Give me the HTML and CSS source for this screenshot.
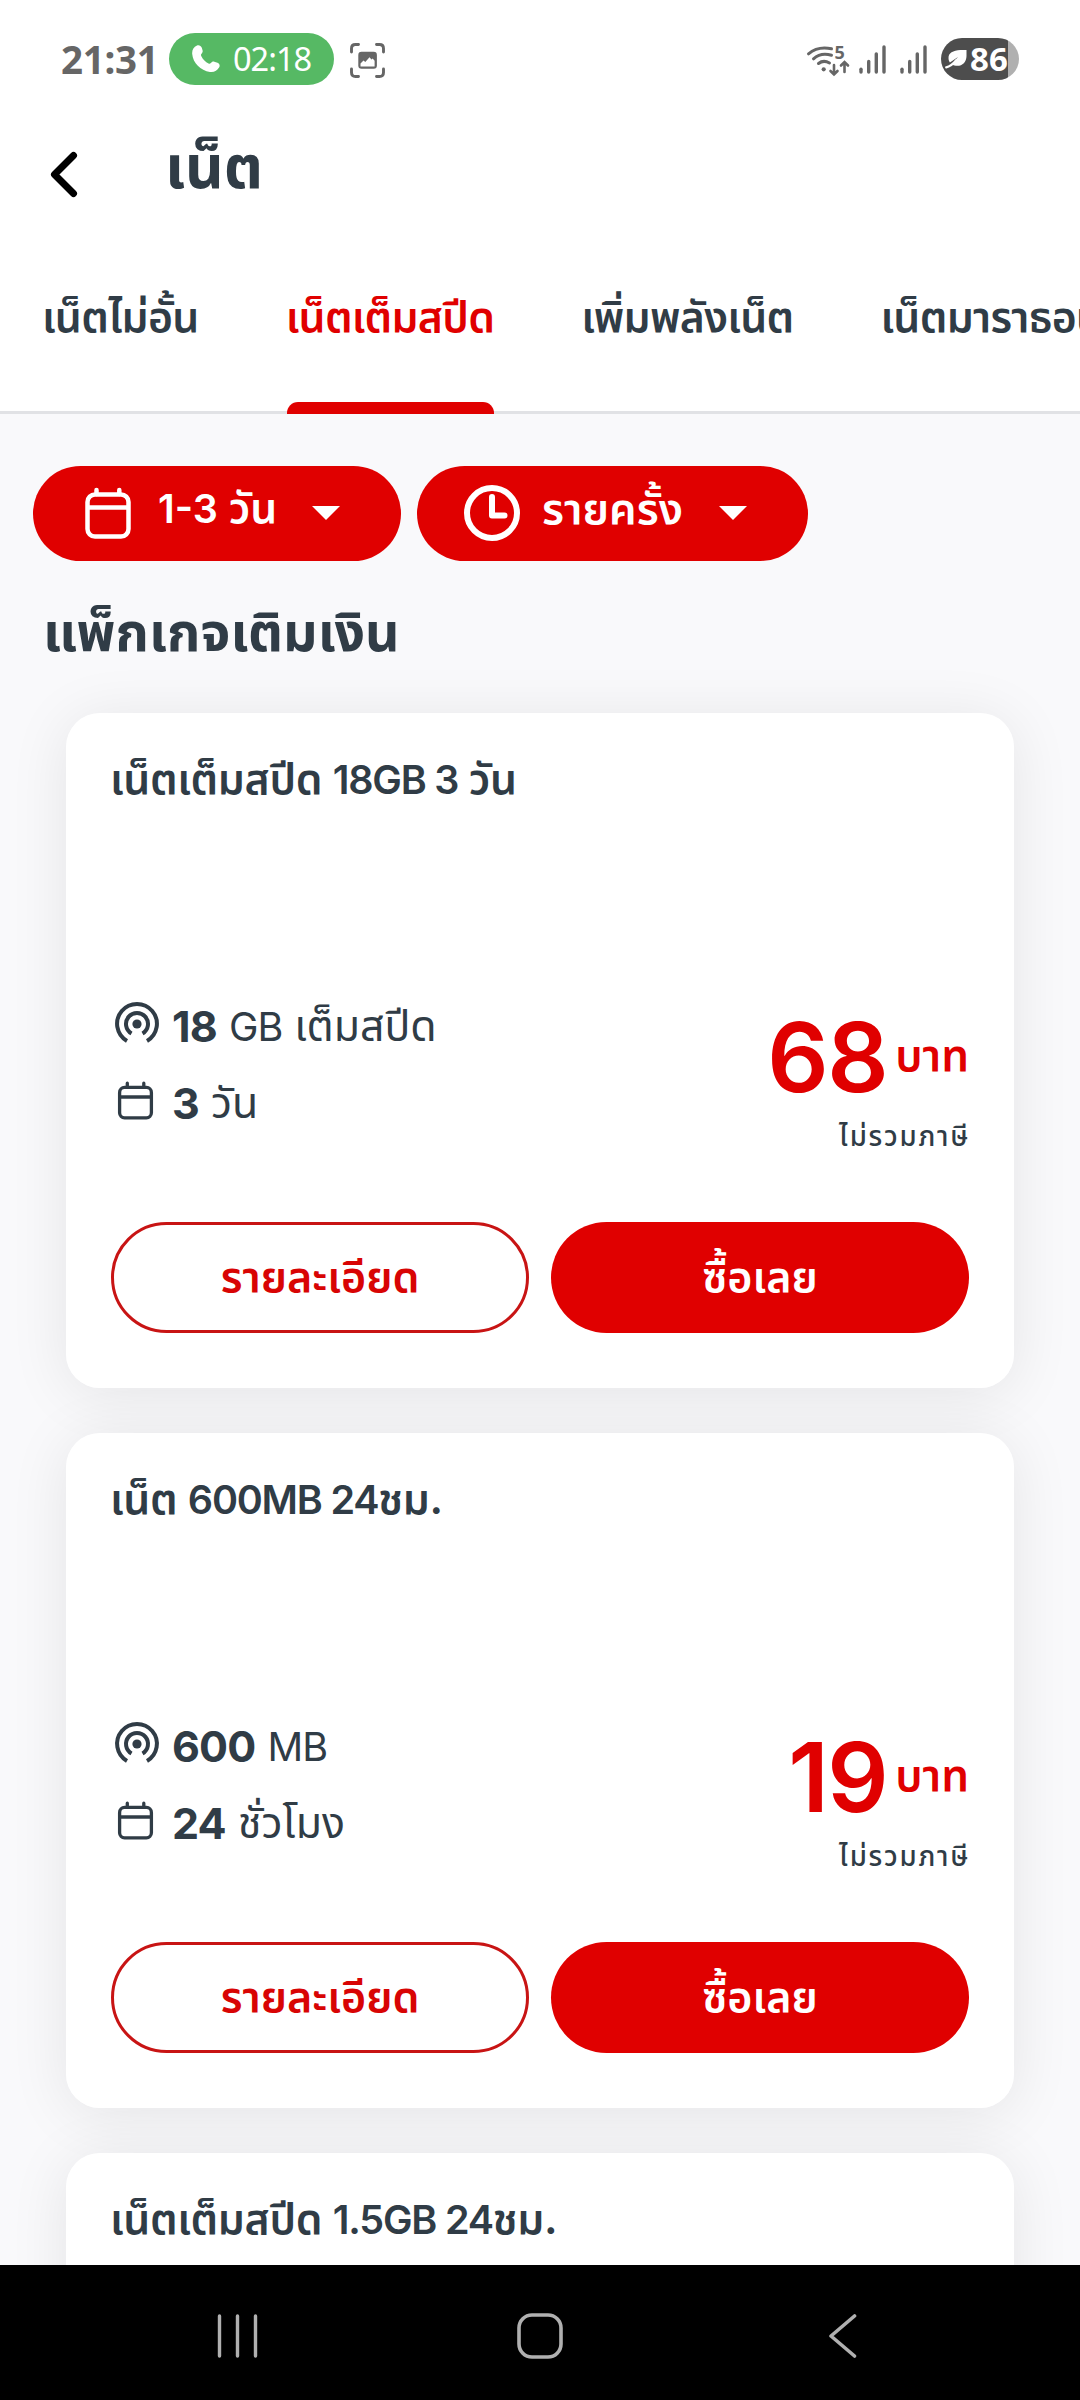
FILE: index.html
```html
<!DOCTYPE html>
<html lang="th">
<head>
<meta charset="utf-8">
<title>เน็ต</title>
<link rel="stylesheet" href="styles.css">
</head>
<body>
<svg class="defs" aria-hidden="true">
  <symbol id="i-signal" viewBox="0 0 28 32">
    <g fill="none" stroke="currentColor" stroke-width="3.4" stroke-linecap="round">
      <path d="M2 25.3V28"/><path d="M9.7 17.5V28"/><path d="M17.3 10V28"/><path d="M25 3V28"/>
    </g>
  </symbol>
  <symbol id="i-data" viewBox="0 0 60 77">
    <circle cx="26" cy="36" r="4.6" fill="currentColor"/>
    <g fill="none" stroke="currentColor" stroke-width="4">
      <path d="M20.5 45.5A11 11 0 1 1 31.5 45.5"/>
      <path d="M16 53A19.9 19.9 0 1 1 36 53"/>
    </g>
  </symbol>
  <symbol id="i-days" viewBox="0 0 60 77">
    <g fill="none" stroke="currentColor" stroke-width="3.3">
      <rect x="8.6" y="22.4" width="31.8" height="30.4" rx="5"/>
      <path d="M8.6 32H40.4"/>
      <path d="M16.3 22V18.2M32.8 22V18.2" stroke-linecap="round"/>
    </g>
  </symbol>
</svg>

<header class="statusbar">
  <span class="clock">21:31</span>
  <span class="call">
    <svg width="28" height="28" viewBox="0 0 28 28"><path fill="currentColor" d="M5 .5C7-.3 9 .8 9.8 2.8L10.6 5.5C11 7 10 8 9.3 9C8.8 9.8 9 10.6 9.5 11.5C11 14.5 13.5 17 16.5 18.5C17.5 19 18.2 18.8 18.8 18C19.8 17 20.8 16.2 22.3 16.7L25.5 17.7C27.5 18.5 28.2 20.5 27.2 22.3C25.2 26 22 27.5 18 27C8.5 25.5 1 18 .2 9C-.1 5 1.5 2 5 .5Z"/></svg>
    <span>02:18</span>
  </span>
  <svg class="capture" width="35" height="35" viewBox="0 0 35 35">
    <path fill="none" stroke="currentColor" stroke-width="2.9" stroke-linecap="round" d="M1.5 9V5.5Q1.5 1.5 5.5 1.5H8.5M26.5 1.5H29.5Q33.5 1.5 33.5 5.5V9M33.5 26V29.5Q33.5 33.5 29.5 33.5H26.5M8.5 33.5H5.5Q1.5 33.5 1.5 29.5V26"/>
    <rect x="8.3" y="8.8" width="18.6" height="17" rx="3.2" fill="currentColor"/>
    <path fill="#fff" d="M10.5 23.5V20.5L13.5 17.5L15.3 19L19.5 14.2L21.5 16.5L22.7 15.5L24.6 17.8V23.5Z"/>
  </svg>
  <svg class="wifi" width="44" height="44" viewBox="0 -8 44 44">
    <g fill="none" stroke="currentColor" stroke-width="3" stroke-linecap="round">
      <path d="M2.5 9.8Q12 1.8 25.5 4.8"/>
      <path d="M7.5 14.8Q15 8 25.5 11.3"/>
      <path d="M12.5 19.5Q17.5 15.5 23.5 19"/>
      <path d="M28 21V30M24.5 27L28 30.5L31.5 27" stroke-width="2.6"/>
      <path d="M38.5 28V18.5M35 21.5L38.5 18L42 21.5" stroke-width="2.6"/>
    </g>
    <circle cx="17.7" cy="25.3" r="2.1" fill="currentColor"/>
    <text class="wifi-gen" x="28.5" y="15.3">5</text>
  </svg>
  <svg class="signal" width="28" height="32"><use href="#i-signal"/></svg>
  <svg class="signal" width="28" height="32"><use href="#i-signal"/></svg>
  <span class="battery">
    <svg width="22" height="20" viewBox="0 0 22 20"><path fill="#fff" d="M21.5 1C13 .5 4.5 1.5 3.6 7.5C3.3 10 3.8 12 4.9 13.5L13 8L6.5 15.2C14 19.5 21.5 15 21.5 7Z"/><path d="M1.2 18.3Q6 17.5 11.5 11" fill="none" stroke="#fff" stroke-width="2.2" stroke-linecap="round"/></svg>
    <span>86</span>
  </span>
</header>

<div class="titlebar">
  <svg width="30" height="47" viewBox="0 0 30 47"><path d="M24.5 4.5L5.5 23.5L24.5 42.5" fill="none" stroke="#000" stroke-width="7" stroke-linecap="round" stroke-linejoin="round"/></svg>
  <h1>เน็ต</h1>
</div>

<nav class="tabs">
  <a class="tab">เน็ตไม่อั้น</a>
  <a class="tab active">เน็ตเต็มสปีด</a>
  <a class="tab">เพิ่มพลังเน็ต</a>
  <a class="tab">เน็ตมาราธอน</a>
</nav>

<main class="content">
  <div class="chips">
    <button class="chip chip-days">
      <svg width="48" height="54" viewBox="0 0 48 54"><g fill="none" stroke="#fff" stroke-width="4.5"><rect x="3.5" y="8.5" width="41" height="42" rx="7.5"/><path d="M3.5 21.5H44.5"/><path d="M12.5 8V4M35.3 8V4" stroke-linecap="round"/></g></svg>
      <span class="chip-label"><span class="lat">1-3</span> วัน</span>
      <svg width="28" height="14" viewBox="0 0 28 14"><path d="M0 0H28L14 14Z" fill="#fff"/></svg>
    </button>
    <button class="chip chip-once">
      <svg width="58" height="58" viewBox="0 0 58 58"><g fill="none" stroke="#fff" stroke-width="6"><circle cx="29" cy="29" r="25"/><path d="M29 13V31.5H41.5" stroke-linecap="round" stroke-linejoin="round"/></g></svg>
      <span class="chip-label">รายครั้ง</span>
      <svg width="28" height="14" viewBox="0 0 28 14"><path d="M0 0H28L14 14Z" fill="#fff"/></svg>
    </button>
  </div>

  <h2>แพ็กเกจเติมเงิน</h2>

  <div class="cards">
    <article class="card">
      <h3>เน็ตเต็มสปีด <span class="lat">18GB 3</span> วัน</h3>
      <div class="info">
        <div class="specs">
          <div class="spec"><svg width="60" height="77"><use href="#i-data"/></svg><b>18</b><span><span class="lat">GB</span> เต็มสปีด</span></div>
          <div class="spec"><svg width="60" height="77"><use href="#i-days"/></svg><b>3</b><span>วัน</span></div>
        </div>
        <div class="price">
          <div class="amount"><strong>68</strong><span>บาท</span></div>
          <div class="note">ไม่รวมภาษี</div>
        </div>
      </div>
      <div class="actions"><button class="btn outline">รายละเอียด</button><button class="btn solid">ซื้อเลย</button></div>
    </article>

    <article class="card">
      <h3>เน็ต <span class="lat">600MB 24</span>ชม.</h3>
      <div class="info">
        <div class="specs">
          <div class="spec"><svg width="60" height="77"><use href="#i-data"/></svg><b>600</b><span><span class="lat">MB</span></span></div>
          <div class="spec"><svg width="60" height="77"><use href="#i-days"/></svg><b>24</b><span>ชั่วโมง</span></div>
        </div>
        <div class="price">
          <div class="amount"><strong>19</strong><span>บาท</span></div>
          <div class="note">ไม่รวมภาษี</div>
        </div>
      </div>
      <div class="actions"><button class="btn outline">รายละเอียด</button><button class="btn solid">ซื้อเลย</button></div>
    </article>

    <article class="card">
      <h3>เน็ตเต็มสปีด <span class="lat">1.5GB 24</span>ชม.</h3>
    </article>
  </div>
</main>

<footer class="navbar">
  <svg width="42" height="44" viewBox="0 0 42 44"><path d="M2.5 2V42M20.5 2V42M38.5 2V42" stroke="#b0b0b0" stroke-width="3.4" stroke-linecap="round"/></svg>
  <svg class="home" width="46" height="46" viewBox="0 0 46 46"><rect x="2" y="2" width="42" height="42" rx="13" fill="none" stroke="#b0b0b0" stroke-width="3.6"/></svg>
  <svg width="29" height="44" viewBox="0 0 29 44"><path d="M26.5 2L3 22L26.5 42" fill="none" stroke="#b0b0b0" stroke-width="3.6" stroke-linecap="round" stroke-linejoin="round"/></svg>
</footer>
</body>
</html>
```
FILE: styles.css
```css
* { box-sizing: border-box; margin: 0; padding: 0; }

body {
  width: 1080px;
  height: 2400px;
  overflow: hidden;
  display: flex;
  flex-direction: column;
  background: #fff;
  color: #303c46;
  font-family: Inter, "Noto Sans Thai", "Noto Sans", sans-serif;
  font-weight: 600;
  font-size: 42.7px;
}

.defs { display: none; }
svg { flex: none; display: block; }
button { border: 0; font: inherit; color: inherit; }

/* status bar */
.statusbar {
  flex: none;
  height: 118px;
  padding: 0 61px 0 61px;
  display: flex;
  align-items: center;
  color: #666;
  font-family: "Noto Sans", sans-serif;
}
.clock { width: 108px; font-size: 38.5px; font-weight: 700; line-height: 52px; letter-spacing: -.3px; }
.call {
  width: 165px;
  height: 52px;
  border-radius: 26px;
  background: #56b964;
  color: #fff;
  display: flex;
  align-items: center;
  gap: 13px;
  padding-left: 23px;
  font-size: 32.5px;
  font-weight: 400;
  line-height: 50px;
  letter-spacing: -1px;
}
.capture { margin: 2px 0 0 16px; }
.wifi { margin-left: auto; margin-top: -2px; }
.wifi-gen { font: 700 18px "Noto Sans", sans-serif; fill: currentColor; }
.signal { margin: 2px 0 0 9px; }
.signal + .signal { margin: 2px 13px 0 13px; }
.battery {
  width: 78px;
  height: 42px;
  border-radius: 21px;
  background: linear-gradient(90deg, #4d4d4d 67px, #b0b0b0 67px);
  color: #fff;
  display: flex;
  align-items: center;
  gap: 3px;
  padding-left: 4px;
  font-size: 33px;
  font-weight: 700;
  line-height: 42px;
}

/* title bar */
.titlebar {
  flex: none;
  height: 113px;
  display: flex;
  align-items: center;
  padding-left: 49px;
  gap: 86px;
}
.titlebar h1 {
  padding-bottom: 10px;
  font-family: "Noto Sans Thai", sans-serif;
  font-size: 60px;
  font-weight: 700;
  line-height: 90px;
}

/* tabs */
.tabs {
  flex: none;
  height: 183px;
  border-bottom: 3px solid #e1e2e5;
  display: flex;
  gap: 87px;
  padding-left: 42px;
  white-space: nowrap;
}
.tab { position: relative; flex: none; height: 180px; line-height: 171px; letter-spacing: -.7px; }
.tab.active { color: #e00000; }
.tab.active::after {
  content: "";
  position: absolute;
  left: 1px;
  right: 0;
  bottom: -3px;
  height: 12px;
  border-radius: 11px 11px 0 0;
  background: #e00000;
}

/* content */
.content {
  flex: 1;
  min-height: 0;
  overflow: hidden;
  isolation: isolate;
  background: #f9f9fb;
  padding-top: 52px;
}
.chips { display: flex; gap: 16px; padding-left: 33px; }
.chip {
  height: 94.5px;
  border-radius: 48px;
  background: #e00000;
  color: #fff;
  display: flex;
  align-items: center;
}
.chip-days { width: 368px; padding-left: 51px; }
.chip-once { width: 391px; padding-left: 46px; }
.chip-label { text-align: left; line-height: 80px; padding-bottom: 10px; white-space: nowrap; }
.chip-days .chip-label { width: 180px; padding-left: 26px; }
.chip-days .lat { font-size: 39.5px; line-height: 1; }
.chip-once .chip-label { width: 198px; padding-left: 21px; font-size: 43.5px; }

h2 {
  margin: 37px 0 0 43px;
  font-family: "Noto Sans Thai", sans-serif;
  font-size: 53.5px;
  font-weight: 700;
  line-height: 74px;
}

/* package cards */
.cards { display: flex; flex-direction: column; gap: 44.5px; padding: 41px 66px 0; }
.card {
  position: relative;
  flex: none;
  height: 675.5px;
  border-radius: 34px;
  background: #fff;
  padding: 36px 45px 0;
}
/* shadow sits below every card so neighbours stay white */
.card::before {
  content: "";
  position: absolute;
  inset: 0;
  z-index: -1;
  border-radius: 34px;
  box-shadow: 0 6px 60px rgba(0, 0, 0, .085);
}
.card h3 { font-size: 42.7px; font-weight: 570; line-height: 60px; margin-left: -1px; letter-spacing: -.3px; }
.card h3 .lat { font-size: 39.5px; line-height: 1; letter-spacing: -1.2px; }

.info { display: flex; justify-content: space-between; height: 170px; margin-top: 179px; }
.spec { display: flex; align-items: center; height: 77px; line-height: 74px; }
.spec b { font-size: 43px; font-weight: 750; margin: 0 12px 0 1px; letter-spacing: -.8px; }
.spec span { font-size: 42.8px; font-weight: 390; }
.spec .lat { font-size: 39.5px; line-height: 1; letter-spacing: -1px; }
.price { padding-top: 19px; text-align: right; }
.amount {
  display: flex;
  align-items: center;
  justify-content: flex-end;
  height: 110px;
  color: #e00000;
}
.amount strong { font-size: 96px; font-weight: 600; line-height: 100px; padding-bottom: 10px; letter-spacing: -1.5px; }
.amount span { font-size: 44px; line-height: 60px; padding-bottom: 14px; margin-left: 8px; }
.note { font-size: 27.5px; font-weight: 500; line-height: 38px; letter-spacing: 1.8px; margin-right: -1px; }

.actions { display: flex; gap: 22px; margin-top: 64px; }
.btn {
  width: 418px;
  height: 111.5px;
  border-radius: 56px;
  font-size: 43px;
  line-height: 100px;
  padding-bottom: 2px;
}
.outline { background: #fff; border: 3px solid #c81414; color: #d80404; }
.solid { background: #e00000; color: #fff; }

/* system navigation */
.navbar {
  flex: none;
  height: 135px;
  background: #000;
  display: flex;
  align-items: center;
  justify-content: space-between;
  padding: 6px 223px 0 217px;
}
.home { margin-right: 8px; }
```
